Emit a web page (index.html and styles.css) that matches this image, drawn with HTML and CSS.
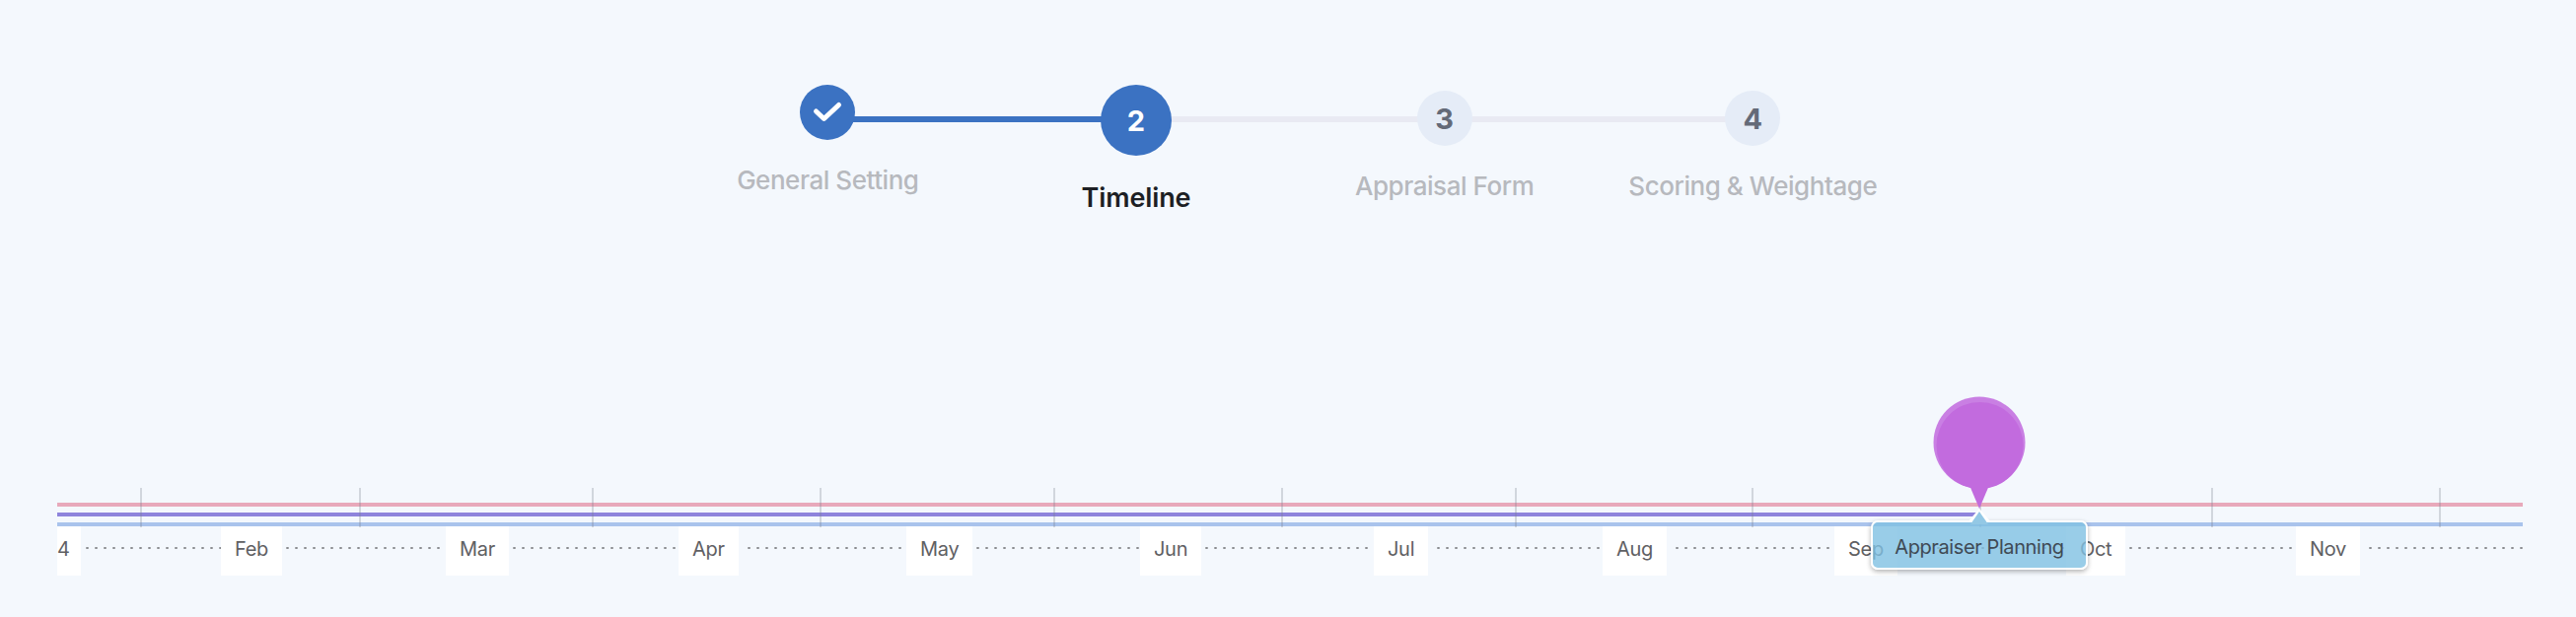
FILE: index.html
```html
<!DOCTYPE html>
<html lang="en">
<head>
    <meta charset="UTF-8">
    <meta name="viewport" content="width=device-width, initial-scale=1.0">
    <title>Timeline</title>
    <link rel="stylesheet" href="styles.css">
</head>
<body>

<div class="stepper">
    <div class="step done">
        <div class="circle">
            <svg width="56" height="56" viewBox="0 0 56 56"><path d="M16.5 27l8 7.5 15-14" fill="none" stroke="#fff" stroke-width="5" stroke-linecap="round" stroke-linejoin="round"/></svg>
        </div>
        <div class="label">General Setting</div>
    </div>
    <div class="step active">
        <div class="circle">2</div>
        <div class="label">Timeline</div>
    </div>
    <div class="step">
        <div class="circle">3</div>
        <div class="label">Appraisal Form</div>
    </div>
    <div class="step">
        <div class="circle">4</div>
        <div class="label">Scoring &amp; Weightage</div>
    </div>
</div>

<div class="timeline">
    <div class="lanes">
        <div class="lane lane-pink"></div>
        <div class="lane lane-purple"></div>
        <div class="lane lane-blue"></div>
    </div>

    <div class="ticks">
        <span class="tick"></span><span class="tick"></span><span class="tick"></span>
        <span class="tick"></span><span class="tick"></span><span class="tick"></span>
        <span class="tick"></span><span class="tick"></span><span class="tick"></span>
        <span class="tick"></span><span class="tick"></span>
    </div>

    <div class="months">
        <div class="month first"><span class="name">4</span><span class="dots"></span></div>
        <div class="month"><span class="name">Feb</span><span class="dots"></span></div>
        <div class="month"><span class="name">Mar</span><span class="dots"></span></div>
        <div class="month far"><span class="name">Apr</span><span class="dots"></span></div>
        <div class="month"><span class="name">May</span><span class="dots"></span></div>
        <div class="month"><span class="name">Jun</span><span class="dots"></span></div>
        <div class="month far"><span class="name">Jul</span><span class="dots"></span></div>
        <div class="month far"><span class="name">Aug</span><span class="dots"></span></div>
        <div class="month"><span class="name">Sep</span><span class="dots"></span></div>
        <div class="month"><span class="name">Oct</span><span class="dots"></span></div>
        <div class="month far"><span class="name">Nov</span><span class="dots"></span></div>
    </div>

    <!-- pin and its tooltip sit over the lanes -->
    <svg class="pin" width="94" height="116" viewBox="0 0 94 116">
        <circle cx="47" cy="47" r="46.5" fill="#c97fe3"/>
        <circle cx="47.5" cy="50" r="44" fill="#c26bde"/>
        <path d="M36 88h22l-11 26z" fill="#c26bde"/>
    </svg>
    <div class="tooltip">Appraiser Planning</div>
</div>

</body>
</html>
```

FILE: styles.css
```css
html, body {
    margin: 0;
    height: 100%;
}
body {
    font-family: "Inter", Arial, sans-serif;
    background-color: #f4f8fd;
    overflow: hidden;
}

/* stepper */
.stepper {
    display: grid;
    grid-template-columns: repeat(4, 312.67px);
    width: 1251px;
    margin-left: 683px;
    height: 495px;
}
.step {
    position: relative;
    display: flex;
    flex-direction: column;
    align-items: center;
    padding-top: 92px;
}
.step::after {
    content: "";
    position: absolute;
    top: 118px;
    left: 50%;
    width: 100%;
    height: 6px;
    background-color: #e9eaf3;
}
.step:last-child::after {
    display: none;
}
.step.done::after {
    background-color: #3b72c2;
}
.step.done,
.step.active {
    padding-top: 86px;
}
.circle {
    position: relative;
    z-index: 1;
    display: flex;
    align-items: center;
    justify-content: center;
    width: 56px;
    height: 56px;
    border-radius: 50%;
    background-color: #e5ecf7;
    color: #646a78;
    font-size: 29px;
    font-weight: 700;
}
.done .circle,
.active .circle {
    background-color: #3b72c2;
    color: white;
}
.active .circle {
    width: 72px;
    height: 72px;
}
.label {
    margin-top: 24px;
    font-size: 26px;
    letter-spacing: -0.45px;
    line-height: 34px;
    font-weight: 500;
    color: #b7b9be;
    white-space: nowrap;
}
.active .label {
    margin-top: 26px;
    font-size: 27px;
    letter-spacing: -0.1px;
    font-weight: 600;
    color: #1d1f24;
}

/* timeline */
.timeline {
    position: relative;
    width: 2500px;
    margin-left: 58px;
}
.lanes {
    display: flex;
    flex-direction: column;
    gap: 6px;
    padding-top: 15px;
}
.lane {
    height: 4px;
}
.lane-pink {
    background-color: #e8a9bb;
}
.lane-purple {
    width: 1948px;
    background-color: #8e84dc;
}
.lane-blue {
    background-color: #a9c3ec;
}
.ticks {
    position: absolute;
    top: 0;
    left: 0;
    display: grid;
    grid-template-columns: 222px 236px 231px 237px 231px 237px 240px 231px 235px 231px 60px;
    padding-left: 84px;
}
.tick {
    width: 2px;
    height: 40px;
    background-color: rgba(120, 125, 140, 0.28);
}
.months {
    display: grid;
    grid-template-columns: 166px 228px 236px 231px 237px 237px 232px 235px 235px 233px 230px;
    height: 50px;
}
.month {
    display: flex;
    min-width: 0;
}
.name {
    padding: 0 14px 4px;
    background-color: white;
    color: #5f6063;
    font-size: 20px;
    letter-spacing: -0.3px;
    line-height: 46px;
}
.first .name {
    padding-left: 0;
    padding-right: 11px;
}
.dots {
    flex: 1;
    margin-left: 1px;
    background-image: radial-gradient(circle, #8a8c90 1px, transparent 1.4px);
    background-size: 9px 4px;
    background-position: 0 20px;
    background-repeat: repeat-x;
}
.far .dots {
    margin-left: 6px;
}
.first .dots {
    margin-left: 2px;
}
.pin {
    position: absolute;
    top: -93px;
    left: 1902px;
}
.tooltip {
    position: absolute;
    top: 33px;
    left: 1839px;
    width: 216px;
    height: 46px;
    border: 2px solid white;
    border-radius: 7px;
    background-color: rgba(128, 192, 226, 0.8);
    box-shadow: 0 2px 5px rgba(0, 0, 0, 0.3);
    color: #3f4a55;
    font-size: 20px;
    letter-spacing: -0.4px;
    line-height: 50px;
    text-align: center;
}
.tooltip::before,
.tooltip::after {
    content: "";
    position: absolute;
    clip-path: polygon(50% 0, 100% 100%, 0 100%);
}
.tooltip::before {
    top: -14px;
    left: 96px;
    width: 24px;
    height: 14px;
    background-color: white;
}
.tooltip::after {
    top: -11px;
    left: 99px;
    width: 18px;
    height: 13px;
    background-color: #93c8e5;
}
```
